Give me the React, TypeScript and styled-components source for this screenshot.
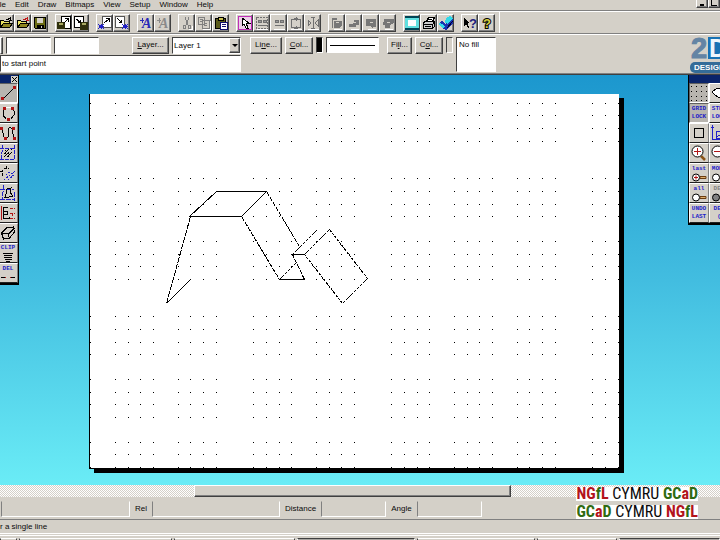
import React from 'react';
import styled, { createGlobalStyle, css } from 'styled-components';

const face = '#d4d0c8';
const shade = '#808080';
const dark = '#404040';
const ink = '#0a0a0a';
const blue = '#2020c8';
const ui = `'Liberation Sans', Arial, sans-serif`;

const Global = createGlobalStyle`
  *, *::before, *::after { box-sizing: border-box; }
  html, body { margin: 0; height: 100%; overflow: hidden; }
  #root { height: 100%; }
  body { background: ${face}; font: 8px/10px ${ui}; color: ${ink}; }
  button, input, select { font: inherit; color: inherit; margin: 0; border-radius: 0; }
  svg { display: block; flex: none; }
`;

const raised = css`
  background: ${face};
  border: 1px solid;
  border-color: #fff ${dark} ${dark} #fff;
  box-shadow: inset -1px -1px 0 ${shade};
`;
const sunken = css`
  border: 1px solid;
  border-color: ${dark} #fff #fff ${dark};
`;

const Shell = styled.main`
  position: relative;
  display: flex;
  flex-direction: column;
  height: 100vh;
  overflow: hidden;
  background: ${face};
`;

const MenuBar = styled.nav`
  display: flex;
  height: 11px;
  flex: none;
  border-bottom: 1px solid ${shade};
  overflow: hidden;
`;
const MenuList = styled.div`
  display: flex;
  flex: 1;
  gap: 9px;
  margin-left: -7px;
`;
const MenuItem = styled.button`
  height: 8px;
  padding: 0;
  border: 0;
  background: none;
  line-height: 7px;
`;
const WindowButton = styled.button`
  ${raised}
  width: 12px;
  height: 8px;
  flex: none;
  padding: 0;
  border-top: 0;
`;

const ToolBar = styled.div`
  display: flex;
  gap: 4px;
  flex: none;
  height: 23px;
  border-top: 1px solid #fff;
  border-bottom: 1px solid ${shade};
  overflow: hidden;
`;
const ToolGroups = styled.div`
  display: flex;
  gap: 7px;
  padding-top: 2px;
  margin-left: -3px;
`;
const ToolGroup = styled.div`
  display: flex;
`;
const ToolButton = styled.button`
  ${raised}
  display: grid;
  place-items: center;
  width: 17px;
  height: 18px;
  padding: 0;
`;
const Divider = styled.div`
  width: 1px;
  background: #fff;
`;

const OptionsBar = styled.div`
  display: flex;
  align-items: flex-start;
  flex: none;
  height: 41px;
  padding-top: 2px;
  border-top: 1px solid #fff;
  border-bottom: 1px solid ${dark};
  box-shadow: inset 0 -1px 0 ${shade};
  overflow: hidden;
`;
const LeftOptions = styled.div`
  display: flex;
  flex-direction: column;
  gap: 1px;
  width: 241px;
`;
const OptionRow = styled.div`
  display: flex;
  align-items: center;
  gap: 3px;
`;
const Stub = styled.span`
  ${raised}
  width: 3px;
  height: 17px;
`;
const Field = styled.input<{ $w?: number }>`
  ${sunken}
  width: ${p => (p.$w ? `${p.$w}px` : '100%')};
  height: 17px;
  padding: 0 1px;
  background: #fff;
  outline: 0;
`;
const PushButton = styled.button<{ $w: number }>`
  ${raised}
  width: ${p => p.$w}px;
  height: 17px;
  padding: 0 0 2px;
  white-space: nowrap;
`;
const Spacer = styled.span`
  flex: 1;
`;
const SelectBox = styled.label`
  ${sunken}
  display: flex;
  align-items: stretch;
  width: 69px;
  height: 17px;
  background: #fff;
`;
const Select = styled.select`
  appearance: none;
  flex: 1;
  min-width: 0;
  padding: 0 1px;
  border: 0;
  background: #fff;
`;
const Drop = styled.span`
  ${raised}
  display: grid;
  place-items: center;
  width: 11px;
`;
const StyleOptions = styled.div`
  display: flex;
  gap: 3px;
  padding-left: 9px;
`;
const Swatch = styled.span<{ $c: string }>`
  ${sunken}
  width: 7px;
  height: 16px;
  background: ${p => p.$c};
`;
const LineSample = styled.span`
  ${sunken}
  display: flex;
  align-items: center;
  width: 53px;
  height: 16px;
  padding: 0 3px;
  margin-right: 5px;
  background: #fff;
  &::after { content: ''; flex: 1; height: 1px; background: #000; }
`;
const FillList = styled.div`
  ${sunken}
  width: 40px;
  height: 35px;
  padding: 2px;
  background: #fff;
`;
const Brand = styled.div`
  width: 30px;
  height: 38px;
  margin-left: auto;
  overflow: hidden;
`;

const Workspace = styled.section`
  display: flex;
  align-items: flex-start;
  flex: 1;
  min-height: 0;
  background: linear-gradient(#1c97ce, #42bde0 50%, #6aecf6);
  overflow: hidden;
`;
const Palette = styled.aside<{ $side: 'left' | 'right' }>`
  display: flex;
  flex-direction: column;
  flex: none;
  width: ${p => (p.$side === 'left' ? 19 : 32)}px;
  background: ${face};
  border: 0 solid #000;
  border-width: ${p => (p.$side === 'left' ? '0 1px 2px 0' : '0 0 2px 1px')};
  overflow: hidden;
`;
const PaletteTitle = styled.div`
  display: flex;
  align-items: flex-end;
  justify-content: flex-end;
  height: 8px;
  background: #0a246a;
`;
const CloseButton = styled.button`
  display: grid;
  place-items: center;
  width: 7px;
  height: 7px;
  padding: 0;
  border: 0;
  background: ${face};
`;
const PaletteGrid = styled.div<{ $cols: number }>`
  display: grid;
  grid-template-columns: repeat(${p => p.$cols}, 20px);
  justify-content: ${p => (p.$cols === 1 ? 'end' : 'start')};
`;
const PaletteButton = styled.button<{ $on?: boolean }>`
  display: flex;
  flex-direction: column;
  align-items: center;
  justify-content: center;
  width: 20px;
  height: 20px;
  padding: 0;
  overflow: hidden;
  color: ${blue};
  font: bold 6px/8px 'Liberation Mono', monospace;
  background: ${p => (p.$on ? '#b8b5af' : face)};
  border: 1px solid;
  border-color: ${p => (p.$on ? '#606060 #fff #fff #606060' : '#fff #808080 #202020 #fff')};
`;
const Dimmed = styled.span`
  color: ${shade};
`;

const Paper = styled.div`
  flex: 1;
  margin: 19px 69px 0 70px;
  background: #fff;
  box-shadow: 5px 4px 0 #000;
`;

const ScrollBar = styled.div`
  display: flex;
  flex: none;
  height: 12px;
  background: repeating-conic-gradient(${face} 0 25%, #fff 0 50%) 0 0 / 2px 2px;
`;
const ScrollThumb = styled.button`
  ${raised}
  width: 44%;
  margin-left: 27%;
  padding: 0;
`;
const StatusRow = styled.div`
  display: flex;
  align-items: center;
  flex: none;
  height: 23px;
  padding: 4px 0 3px 1px;
  border-bottom: 1px solid ${shade};
`;
const Readout = styled.label`
  display: flex;
  align-items: center;
  height: 16px;
`;
const ReadoutText = styled.span`
  padding: 0 5px;
`;
const ReadoutField = styled.input<{ $w: number }>`
  width: ${p => p.$w}px;
  height: 16px;
  padding: 0 2px;
  outline: 0;
  background: none;
  border: 1px solid;
  border-color: ${face} #fff #fff ${shade};
`;
const Hint = styled.div`
  flex: none;
  height: 14px;
  padding-top: 2px;
  border-bottom: 1px solid #fff;
`;
const TaskBar = styled.footer`
  display: flex;
  gap: 2px;
  flex: none;
  height: 6px;
  padding-top: 3px;
  border-top: 1px solid ${face};
  box-shadow: inset 0 1px 0 #fff;
`;
const Task = styled.span<{ $w: number; $on?: boolean }>`
  flex: ${p => p.$w};
  height: 6px;
  border: 1px solid;
  border-color: ${p => (p.$on ? `${dark} #fff` : `#fff ${dark}`)};
  background: ${p => (p.$on ? '#a8a5a0' : face)};
`;

const Credit = styled.div`
  position: absolute;
  right: 22px;
  bottom: 21px;
  display: grid;
  gap: 4px;
  font: 16px/14px 'Liberation Sans Narrow', 'Roboto Condensed', 'Liberation Sans', sans-serif;
  text-align: center;
`;
const CreditLine = styled.div`
  height: 14px;
  background: #fff;
  white-space: nowrap;
`;
const CreditName = styled.b<{ $c: string; $accent: string }>`
  color: ${p => p.$c};
  i { font-style: normal; color: ${p => p.$accent}; }
`;

const Icon = ({ s = 14, children }: { s?: number; children: React.ReactNode }) => (
  <svg width={s} height={s} viewBox={`0 0 ${s} ${s}`} shapeRendering="crispEdges" fill="none" stroke="#000" aria-hidden="true">
    {children}
  </svg>
);

const Folder = ({ arrow }: { arrow: string }) => (
  <Icon>
    <path d="M1.5 11.5V4.5h3l1 1h5v2" fill="#e8e060" />
    <path d="M1.5 11.5l3-4h9l-3 4z" fill="#8c8420" />
    <path d="M7 3.5h2l1-1h2M11.5 1v4M10 4.5h3" stroke={arrow} />
  </Icon>
);
const Floppy = () => (
  <Icon>
    <path d="M1.5 1.5h11v11h-10l-1-1z" fill="#6c6c14" />
    <path d="M4 2h6v5H4z" fill="#d4d0c8" stroke="none" />
    <path d="M4 9h7v4H4z" fill="#000" stroke="none" />
    <path d="M8.5 10v2" stroke="#d4d0c8" />
  </Icon>
);
const DiskPage = ({ out }: { out?: boolean }) => (
  <Icon>
    <path d={out ? 'M.5 .5h9v11h-9z' : 'M4.5 .5h9v12h-9z'} fill="#fff" />
    <path d={out ? 'M6 6h8v8H6z' : 'M0 6h8v7H0z'} fill="#30300c" stroke="none" />
    <path d={out ? 'M8 7h4v2H8z' : 'M2 7h4v2H2z'} fill="#a8a860" stroke="none" />
    <path d={out ? 'M2 3l4 3M4 6.5h3M6.5 4v3' : 'M7 7l4-4M8 2.5h4M11.5 2v4'} />
  </Icon>
);
const HatchPage = ({ out }: { out?: boolean }) => (
  <Icon>
    <path d={out ? 'M.5 .5h9v11h-9z' : 'M4.5 .5h9v11h-9z'} fill="#fff" stroke="#555" />
    <path d={out ? 'M7 8l6 5M7 13l6-5M8 10.5h5M10.5 8v5' : 'M0 8l6 5M0 13l6-5M1 10.5h5M3.5 8v5'} stroke={blue} />
    <path d={out ? 'M2 2l5 5M4 6.5h3M6.5 4v3' : 'M6 7l5-4M8 2.5h4M11.5 2v4'} />
  </Icon>
);
const LetterA = ({ c }: { c: string }) => (
  <Icon>
    <text x="3" y="12" fill={c} stroke="none" fontFamily="Liberation Serif, serif" fontSize="14" fontWeight="bold" fontStyle="italic">A</text>
    <path d="M1 4.5h4M3.5 2v5" stroke={c} />
  </Icon>
);
const Cut = () => (
  <Icon>
    <path d="M5 1l3 8M9 1L6 9" stroke="#808080" />
    <path d="M3.5 9.5h2v3h-2zM8.5 9.5h2v3h-2z" stroke="#808080" />
    <path d="M12 10v3h-3" stroke="#fff" />
  </Icon>
);
const Copy = () => (
  <Icon>
    <path d="M1.5 1.5h6v7h-6zM5.5 4.5h7v8h-7z" fill={face} stroke="#808080" />
    <path d="M3 3.5h3M3 5.5h2M7 7.5h4M7 9.5h4" stroke="#808080" strokeDasharray="3 1" />
    <path d="M13.5 5v9M6 13.5h8" stroke="#fff" />
  </Icon>
);
const Paste = () => (
  <Icon>
    <path d="M1.5 2.5h10v10h-10z" fill="#5c5c1c" />
    <path d="M4 1h5v3H4z" fill="#c8c050" stroke="#000" />
    <path d="M6.5 6.5h7v7h-7z" fill="#fff" stroke="#101070" />
    <path d="M8 8.5h4M8 10.5h4" stroke="#101070" />
  </Icon>
);
const Pointer = () => (
  <Icon>
    <path d="M.5 .5h13v13H.5z" fill="#ecd0e8" stroke="#c030b8" />
    <path d="M4 2v8l2-2 2 4h2l-2-5h3z" fill="#fff" stroke="#000" />
  </Icon>
);
const Group = ({ kind }: { kind: number }) => (
  <Icon>
    <g stroke="#707070">
      {kind === 0 && <path d="M1.5 1.5h11v11h-11z" strokeDasharray="2 1" />}
      {kind < 2 && <path d="M3.5 4.5h3v2h-3zM8.5 4.5h3v2h-3zM3 9.5h9" fill="#999" />}
      {kind === 2 && <path d="M2.5 3.5h9v8h-9zM7 1v4M7 10v3M5 2.5h4M5 12.5h4" />}
      {kind === 3 && <path d="M7 1v12M5 1.5h4M5 12.5h4M2 4v6l3-3zM12 4v6L9 7z" />}
    </g>
    <path d="M2 13.5h11" stroke="#fff" />
  </Icon>
);
const Order = ({ kind }: { kind: number }) => (
  <Icon>
    <path
      d={['M4 5h8v4l-2 3H4zM2 2h5v2H3v8H2z', 'M7 4h5v5H9v2H2V8h4z', 'M2 3h10v8H9v2l-3-3H2z', 'M3 3h10v4l-4 2v3H4V9H2z'][kind]}
      fill="#777" stroke="none"
    />
    <path d="M6 6.5h3" stroke={face} />
    <path d="M4 13.5h8" stroke="#fff" />
  </Icon>
);
const Screen = () => (
  <Icon>
    <path d="M0 0h14v14H0z" fill="#60e0e0" stroke="none" />
    <path d="M0 1h14M0 13h14" stroke="#045" strokeWidth="2" />
    <path d="M3 4h8v6H3z" fill="#fff" stroke="none" />
  </Icon>
);
const Printer = () => (
  <Icon>
    <path d="M4.5 5.5l2-4h6l-2 4" fill="#fff" />
    <path d="M1.5 6.5l2-1h9l-2 3h-9zM1.5 8.5h9v4h-9zM10.5 12.5l2-2v-5" fill="#ccc" />
    <path d="M3 10.5h6M6 3.5h4" />
  </Icon>
);
const Book = () => (
  <Icon>
    <path d="M0 7l3-2 4 3 5-6 2 2v3l-6 7-4-1-4-4z" fill="#1830b0" stroke="none" />
    <path d="M7 2l4-2 3 2-5 6-3-1zM0 7l4 1 2 3-2 1-4-3z" fill="#30d8e8" stroke="none" />
    <path d="M8 12l6-7" stroke="#003" />
  </Icon>
);
const Help = ({ pointer }: { pointer?: boolean }) => (
  <Icon>
    {pointer && <path d="M1 2v8l2-2 2 4h1L5 7h2z" fill="#000" stroke="none" />}
    <text x={pointer ? 6 : 3} y="12" fontFamily="Liberation Sans, sans-serif" fontSize="13" fontWeight="bold"
      fill={pointer ? '#20207c' : '#d8d040'} stroke={pointer ? 'none' : '#000'} strokeWidth="2" paintOrder="stroke">?</text>
  </Icon>
);

const groups: [string, React.ReactNode][][] = [
  [['New', <Folder arrow="#000" />], ['Open', <Folder arrow="#c01818" />], ['Save', <Floppy />]],
  [['Load page', <DiskPage />], ['Save page', <DiskPage out />]],
  [['Load pattern', <HatchPage />], ['Save pattern', <HatchPage out />]],
  [['Text', <LetterA c="#2828b8" />], ['Edit text', <LetterA c="#8a8a8a" />]],
  [['Cut', <Cut />], ['Copy', <Copy />], ['Paste', <Paste />]],
  [['Select', <Pointer />], ['Select all', <Group kind={0} />], ['Group', <Group kind={1} />], ['Rotate', <Group kind={2} />], ['Mirror', <Group kind={3} />]],
  [['To front', <Order kind={0} />], ['Forward', <Order kind={1} />], ['Backward', <Order kind={2} />], ['To back', <Order kind={3} />]],
  [['Preview', <Screen />], ['Print', <Printer />], ['Library', <Book />]],
  [['Context help', <Help pointer />], ['Help', <Help />]],
];

const R = '#b01414';
const node = (pts: number[][]) => pts.map(([x, y]) => <path key={`${x}-${y}`} d={`M${x} ${y}h3v3h-3z`} fill={R} stroke="none" />);

const leftTools: [string, React.ReactNode][] = [
  ['Line', <Icon s={18}><path d="M4 15L15 4" />{node([[2, 13], [14, 2]])}</Icon>],
  ['Circle', <Icon s={18}><path d="M7 4L4 7v4l3 4M12 4l3 3v4l-3 4" /><path d="M7 3h5" stroke="#fff" />{node([[4, 3], [12, 3], [8, 14]])}</Icon>],
  ['Curve', <Icon s={18}><path d="M3 4l2 9 2 2 2-2V5l2-2 2 2 2 9" />{node([[1, 3], [13, 3], [5, 13], [14, 13]])}</Icon>],
  ['Hatch', <Icon s={18}><path d="M1 4h15M4 1L2 16M1 15h15M15 1v15" stroke={blue} strokeDasharray="4 1" /><path d="M5 13l8-8M5 10l5-5M8 13l6-6M6 6l6 6M6 9l4 4" strokeDasharray="1 1" /></Icon>],
  ['Transform', <Icon s={18}><path d="M3 12V7l3-3h4M7 2v4M1 7h4" strokeDasharray="3 1" /><path d="M5 16l11-9M9 16l7-6M7 11l4-3" stroke={blue} strokeDasharray="2 1" /></Icon>],
  ['Edit', <Icon s={18}><path d="M1 5h14M5 1l-2 15M1 15h15M15 8v9" stroke={blue} strokeDasharray="5 1" /><path d="M8 5l4-1-1 4 3 4-4 1H6l1-3z" /></Icon>],
  ['Measure', <Icon s={18}><path d="M2.5 2v14" stroke={R} /><path d="M4.5 3.5h4M4.5 3v12M4.5 7.5h4v3h-4M4 14.5h6v-2" /><path d="M11 4.5h5M11 9.5h5M13.5 10v2M11 14.5h5" stroke={R} strokeDasharray="3 1" /></Icon>],
  ['Solid', <Icon s={18}><path d="M2.5 9l5-5 7-1 1 5-5 6-6 1zM2.5 9l7 1 6-6M9.5 10l1 5" /></Icon>],
  ['Clip', <><span>CLIP</span><Icon s={10}><path d="M0 1.5h10M1 3.5h8M1 5.5h8M2 7.5h7M3 9.5h4" /></Icon></>],
  ['Delete', <><span>DEL</span><svg width="16" height="8" viewBox="0 0 16 8" shapeRendering="crispEdges" aria-hidden="true"><path d="M1 4h4v1H1zM11 4h4v1h-4z" /><path d="M5 4h1v1H5zM10 4h1v1h-1z" fill={R} /></svg></>],
];

const Lens = ({ mark, fill = '#fff' }: { mark?: boolean; fill?: string }) => (
  <svg width="16" height="9" viewBox="0 0 32 18" aria-hidden="true">
    <path d="M18 7h12v4H18z" fill="#e0b070" stroke="#6b3c10" strokeWidth="2" />
    <circle cx="10" cy="9" r="7" fill={fill} stroke="#000" strokeWidth="2" />
    {mark && <path d="M6 9h8M10 5v8" stroke={R} strokeWidth="2" />}
  </svg>
);
const BigLens = ({ minus }: { minus?: boolean }) => (
  <svg width="16" height="16" viewBox="0 0 32 32" aria-hidden="true">
    <path d="M20 22l8 8" stroke="#8b5318" strokeWidth="5" />
    <circle cx="13" cy="13" r="11" fill="#fff" stroke="#000" strokeWidth="2" />
    <path d={minus ? 'M6 13h14' : 'M6 13h14M13 6v14'} stroke={R} strokeWidth="2" />
  </svg>
);

const rightTools: { label: string; on?: boolean; body: React.ReactNode }[] = [
  {
    label: 'Grid',
    on: true,
    body: <Icon s={18}><path d={[2, 7, 12, 16].map(y => [1, 6, 11, 16].map(x => `M${x} ${y}h1v1h-1z`).join('')).join('')} fill="#000" stroke="none" /></Icon>,
  },
  { label: 'Shape', body: <Icon s={18}><path d="M2 8l5-4h9v9H8l-3-2z" fill="#fff" /></Icon> },
  { label: 'Grid lock', on: true, body: <><span>GRID</span><span>LOCK</span></> },
  { label: 'Step lock', body: <><span>STEP</span><span>LOCK</span></> },
  { label: 'Square', body: <Icon s={18}><path d="M4.5 4.5h9v9h-9z" /></Icon> },
  { label: 'Axis', body: <Icon s={18}><path d="M2.5 1v14h14M1 3.5h3M6.5 7.5h9v7h-9z" stroke={blue} /><path d="M7 13l6-5" stroke={blue} strokeDasharray="1 1" /></Icon> },
  { label: 'Zoom in', body: <BigLens /> },
  { label: 'Zoom out', body: <BigLens minus /> },
  { label: 'Zoom last', body: <><span>last</span><Lens mark /></> },
  { label: 'Zoom model', body: <><span>MODE</span><Lens /></> },
  { label: 'Zoom all', body: <><span>all</span><Lens /></> },
  { label: 'Zoom default', body: <><Dimmed>DEL</Dimmed><Lens fill="#808080" /></> },
  { label: 'Undo last', body: <><span>UNDO</span><span>LAST</span></> },
  { label: 'Redo', body: <><span>DEL</span><span>(</span></> },
];

const xs = [90, 115, 128, 140, 153, 178, 190, 203, 216, 253, 266, 279, 291, 316, 329, 341, 354, 391, 404, 417, 429, 454, 467, 479, 492, 517, 529, 542, 555, 592, 605, 618];
const ys = [103, 115, 128, 141, 178, 191, 204, 216, 241, 254, 266, 279, 316, 329, 342, 354, 379, 392, 404, 417, 442, 454, 467];

const Drawing = () => (
  <svg width="100%" viewBox="89 94 530 375" shapeRendering="crispEdges" role="img" aria-label="Drawing sheet">
    <path d={ys.map(y => xs.map(x => `M${x} ${y}h1v1h-1z`).join('')).join('')} fill="#000" />
    <path d="M89 94h1v374h529v1H89z" fill="#000" />
    <g fill="none" stroke="#000" transform="translate(-.5 .5)">
      <path d="M217 191h50M191 216h51M280 279h25M293 254h12M167 303l24-24M217 191l-27 25M242 216l25-25" />
      <path d="M191 216l-24 87" strokeDasharray="6 1" />
      <path d="M267 191l33 55M242 216l38 63M305 279l-12-25" strokeDasharray="5 1" />
      <path d="M317 230l-24 24M280 279l16-16M305 254l25-25M368 278l-25 25" strokeDasharray="3 1" />
      <path d="M330 229l38 49M343 303l-38-49" strokeDasharray="3 1" />
    </g>
  </svg>
);

const menus = ['File', 'Edit', 'Draw', 'Bitmaps', 'View', 'Setup', 'Window', 'Help'];
const red = '#b3141c';
const green = '#2f6b12';
const Ngfl = () => <CreditName $c={red} $accent={green}>NG<i>f</i>L</CreditName>;
const Gcad = () => <CreditName $c={green} $accent={red}>GC<i>a</i>D</CreditName>;

export default function App() {
  return (
    <Shell>
      <Global />
      <MenuBar>
        <MenuList>{menus.map(m => <MenuItem key={m}>{m}</MenuItem>)}</MenuList>
        <WindowButton aria-label="Minimise">
          <Icon s={8}><path d="M3 5h4" strokeWidth="2" /></Icon>
        </WindowButton>
        <WindowButton aria-label="Restore">
          <Icon s={8}><path d="M2.5 0v5.5h6" /></Icon>
        </WindowButton>
      </MenuBar>

      <ToolBar>
        <ToolGroups>
          {groups.map((g, i) => (
            <ToolGroup key={i}>
              {g.map(([label, icon]) => <ToolButton key={label} aria-label={label}>{icon}</ToolButton>)}
            </ToolGroup>
          ))}
        </ToolGroups>
        <Divider />
      </ToolBar>

      <OptionsBar>
        <LeftOptions>
          <OptionRow>
            <Stub />
            <Field $w={45} aria-label="X" />
            <Field $w={45} aria-label="Y" />
            <Spacer />
            <PushButton $w={37}><u>L</u>ayer...</PushButton>
            <SelectBox>
              <Select aria-label="Layer" defaultValue="Layer 1"><option>Layer 1</option></Select>
              <Drop><svg width="6" height="3" viewBox="0 0 6 3" aria-hidden="true"><path d="M0 0h6L3 3z" /></svg></Drop>
            </SelectBox>
          </OptionRow>
          <Field aria-label="Prompt" readOnly value="to start point" />
        </LeftOptions>
        <StyleOptions>
          <PushButton $w={32}>Li<u>n</u>e...</PushButton>
          <PushButton $w={28}><u>C</u>ol...</PushButton>
          <Swatch $c="#000" />
          <LineSample />
          <PushButton $w={25}>Fi<u>l</u>l...</PushButton>
          <PushButton $w={28}>C<u>o</u>l...</PushButton>
          <Swatch $c={face} />
          <FillList>No fill</FillList>
        </StyleOptions>
        <Brand>
          <svg width="46" height="38" viewBox="0 0 46 38" role="img" aria-label="2D Design">
            <text x="1" y="21" fontFamily="Liberation Sans, sans-serif" fontWeight="bold" fontSize="29" fill="#6484a4" stroke="#6484a4" strokeWidth="1">2</text>
            <rect x="18" width="28" height="22" fill="#1872b4" />
            <text x="19" y="20" fontFamily="Liberation Sans, sans-serif" fontWeight="bold" fontSize="25" fill="#eef6fc">D</text>
            <rect y="25" width="46" height="11" rx="5" fill="#346c98" />
            <text x="4" y="33" fontFamily="Liberation Sans, sans-serif" fontWeight="bold" fontSize="8" fill="#fff">DESIGN</text>
          </svg>
        </Brand>
      </OptionsBar>

      <Workspace>
        <Palette $side="left">
          <PaletteTitle>
            <CloseButton aria-label="Close"><Icon s={5}><path d="M0 0l5 5M5 0L0 5" /></Icon></CloseButton>
          </PaletteTitle>
          <PaletteGrid $cols={1}>
            {leftTools.map(([label, body], i) => <PaletteButton key={label} $on={i === 0} aria-label={label}>{body}</PaletteButton>)}
          </PaletteGrid>
        </Palette>
        <Paper><Drawing /></Paper>
        <Palette $side="right">
          <PaletteTitle />
          <PaletteGrid $cols={2}>
            {rightTools.map(t => <PaletteButton key={t.label} $on={t.on} aria-label={t.label}>{t.body}</PaletteButton>)}
          </PaletteGrid>
        </Palette>
      </Workspace>

      <ScrollBar><ScrollThumb aria-label="Scroll" /></ScrollBar>
      <StatusRow>
        <ReadoutField $w={129} aria-label="Absolute" />
        <Readout><ReadoutText>Rel</ReadoutText><ReadoutField $w={128} /></Readout>
        <Readout><ReadoutText>Distance</ReadoutText><ReadoutField $w={65} /></Readout>
        <Readout><ReadoutText>Angle</ReadoutText><ReadoutField $w={65} /></Readout>
      </StatusRow>
      <Hint>r a single line</Hint>
      <TaskBar>
        <Task $w={15} /><Task $w={155} /><Task $w={122} /><Task $w={119} $on /><Task $w={119} /><Task $w={80} /><Task $w={102} $on />
      </TaskBar>

      <Credit>
        <CreditLine><Ngfl /> CYMRU <Gcad /></CreditLine>
        <CreditLine><Gcad /> CYMRU <Ngfl /></CreditLine>
      </Credit>
    </Shell>
  );
}
